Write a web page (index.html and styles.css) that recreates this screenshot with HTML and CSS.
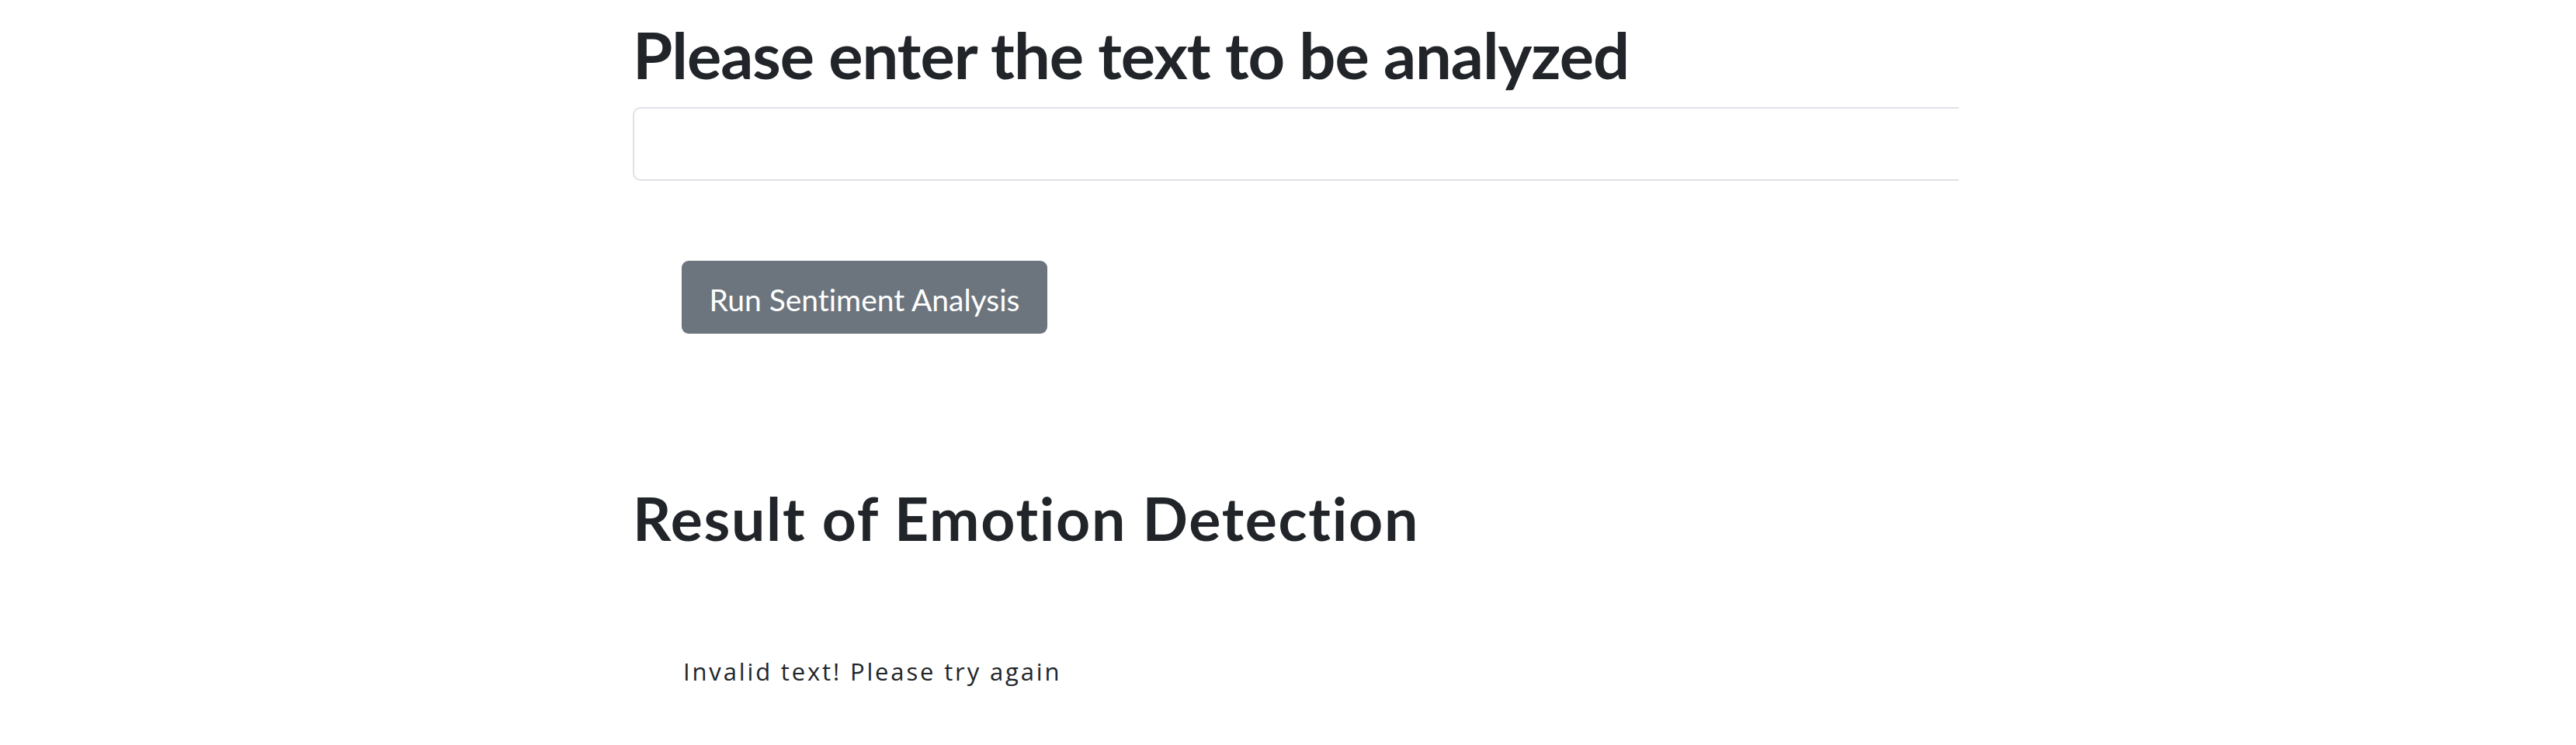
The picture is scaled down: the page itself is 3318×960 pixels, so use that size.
FILE: index.html
```html
<!DOCTYPE html>
<html lang="en">
<head>
<meta charset="utf-8">
<title>Emotion Detection</title>
<link rel="stylesheet" href="styles.css">
</head>
<body>
<main class="container">
  <h1 class="title">Please enter the text to be analyzed</h1>
  <input class="field" type="text" aria-label="Text to analyze">
  <div class="actions">
    <button class="btn" type="button">Run Sentiment Analysis</button>
  </div>
  <h2 class="subtitle">Result of Emotion Detection</h2>
  <p class="result">Invalid text! Please try again</p>
</main>
</body>
</html>
```

FILE: styles.css
```css
html, body {
  margin: 0;
  padding: 0;
  background: #ffffff;
}

body {
  font-family: Lato, "Open Sans", "Liberation Sans", sans-serif;
  color: #212529;
  font-variant-ligatures: none;
}

.container {
  margin-left: 815px;
  width: 1708px;
  overflow: hidden;
}

.title {
  margin: 20px 0 18px 0;
  font-size: 83px;
  font-weight: 700;
  line-height: 100px;
  letter-spacing: -1px;
}

.field {
  display: block;
  box-sizing: border-box;
  width: 1780px;
  height: 95px;
  margin: 0;
  border: 2px solid #dee2e6;
  border-radius: 10px;
  background: #ffffff;
  outline: none;
}

.actions {
  padding: 103px 0 0 63px;
}

.btn {
  display: block;
  box-sizing: border-box;
  width: 471px;
  height: 94px;
  padding: 6px 0 0 0;
  border: none;
  border-radius: 9px;
  background: #6c757d;
  color: #ffffff;
  font-family: Lato, "Open Sans", "Liberation Sans", sans-serif;
  font-variant-ligatures: none;
  font-size: 39px;
  font-weight: 400;
  line-height: 88px;
  text-align: center;
}

.subtitle {
  margin: 190px 0 0 0;
  font-size: 77px;
  font-weight: 700;
  line-height: 94px;
  letter-spacing: 1.7px;
}

.result {
  margin: 129px 0 0 0;
  padding-left: 65px;
  font-family: "Open Sans", Lato, "Liberation Sans", sans-serif;
  font-size: 31px;
  font-weight: 400;
  line-height: 44px;
  letter-spacing: 2.85px;
}
```
